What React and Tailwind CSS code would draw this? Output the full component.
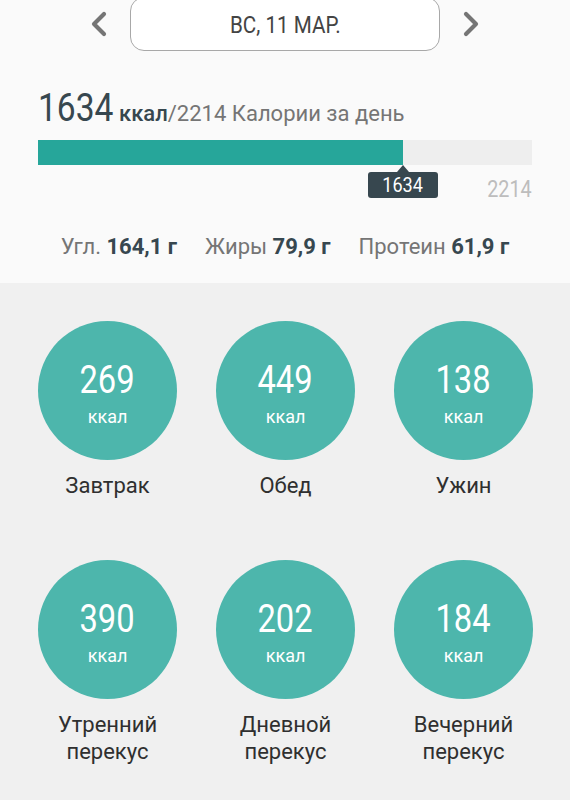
import React from "react";

const meals = [
  { v: 269, label: ["Завтрак"] },
  { v: 449, label: ["Обед"] },
  { v: 138, label: ["Ужин"] },
  { v: 390, label: ["Утренний", "перекус"] },
  { v: 202, label: ["Дневной", "перекус"] },
  { v: 184, label: ["Вечерний", "перекус"] },
];

function Chevron({ dir }) {
  return (
    <svg width="22" height="26" viewBox="0 0 22 26" fill="none">
      {dir === "left" ? (
        <path d="M16 3 L6 13 L16 23" stroke="#757575" strokeWidth="4.2" strokeLinecap="round" strokeLinejoin="round" />
      ) : (
        <path d="M6 3 L16 13 L6 23" stroke="#757575" strokeWidth="4.2" strokeLinecap="round" strokeLinejoin="round" />
      )}
    </svg>
  );
}

export default function App() {
  const consumed = 1634;
  const goal = 2214;
  const pct = (consumed / goal) * 100;
  return (
    <div className="w-[570px] h-[800px] overflow-hidden bg-[#f0f0f0] font-['Roboto','Noto_Sans',sans-serif]">
      <div className="h-[283px] bg-[#fafafa] flex flex-col">
        <div className="flex items-start justify-center h-[51px]">
          <div className="w-[92px] h-[48px] flex items-center justify-end pr-[20px]">
            <Chevron dir="left" />
          </div>
          <div className="w-[310px] h-[54px] -mt-[3px] border-[1.5px] border-[#a8a8a8] rounded-[14px] bg-white flex items-center justify-center">
            <span className="inline-block scale-x-[0.86] text-[24px] text-[#444] pt-[2px]">ВС, 11 МАР.</span>
          </div>
          <div className="w-[92px] h-[48px] flex items-center justify-start pl-[20px]">
            <Chevron dir="right" />
          </div>
        </div>

        <div className="px-[38px] mt-[37px] flex items-baseline h-[40px]">
          <span className="inline-block origin-left scale-x-[0.86] w-[68px] text-[39px] leading-[40px] text-[#37474f] font-normal">1634</span>
          <span className="ml-[13px] text-[22px] font-medium text-[#37474f]">ккал</span>
          <span className="text-[22px] text-[#757575]">/2214 Калории за день</span>
        </div>

        <div className="px-[38px] mt-[12px]">
          <div className="relative h-[25px] w-[494px] bg-[#eeeeee]">
            <div className="h-full bg-[#26a69a]" style={{ width: pct + "%" }} />
            <div
              className="absolute top-[25px] -translate-x-1/2 flex flex-col items-center"
              style={{ left: pct + "%" }}
            >
              <div className="w-0 h-0 border-l-[6px] border-r-[6px] border-b-[7px] border-l-transparent border-r-transparent border-b-[#37474f]" />
              <div className="w-[70px] h-[26px] bg-[#37474f] rounded-[3px] flex items-center justify-center">
                <span className="inline-block scale-x-[0.86] text-white text-[21px] leading-[26px]">1634</span>
              </div>
            </div>
            <div className="absolute right-0 top-[37px]">
              <span className="inline-block origin-right scale-x-[0.86] text-[#bdbdbd] text-[23px] leading-[26px]">2214</span>
            </div>
          </div>
        </div>

        <div className="mt-[69px] flex justify-center gap-[28px] text-[22px] leading-[26px]">
          <span className="text-[#757575]">Угл. <b className="text-[#37474f] font-bold">164,1 г</b></span>
          <span className="text-[#757575]">Жиры <b className="text-[#37474f] font-bold">79,9 г</b></span>
          <span className="text-[#757575]">Протеин <b className="text-[#37474f] font-bold">61,9 г</b></span>
        </div>
      </div>

      <div className="grid grid-cols-[139px_139px_139px] gap-x-[39px] gap-y-[61px] pl-[38px] pt-[38px]">
        {meals.map((m) => (
          <div key={m.v} className="flex flex-col items-center">
            <div className="w-[139px] h-[139px] rounded-full bg-[#4db6ac] flex flex-col items-center pt-[40px]">
              <span className="inline-block scale-x-[0.86] text-white text-[38px] leading-[38px] font-normal">{m.v}</span>
              <span className="mt-[8px] text-white text-[18px] leading-[20px]">ккал</span>
            </div>
            <div className="mt-[12px] text-center text-[22px] leading-[27px] text-[#2f2f2f]">
              {m.label.map((l) => (
                <div key={l}>{l}</div>
              ))}
            </div>
          </div>
        ))}
      </div>
    </div>
  );
}
